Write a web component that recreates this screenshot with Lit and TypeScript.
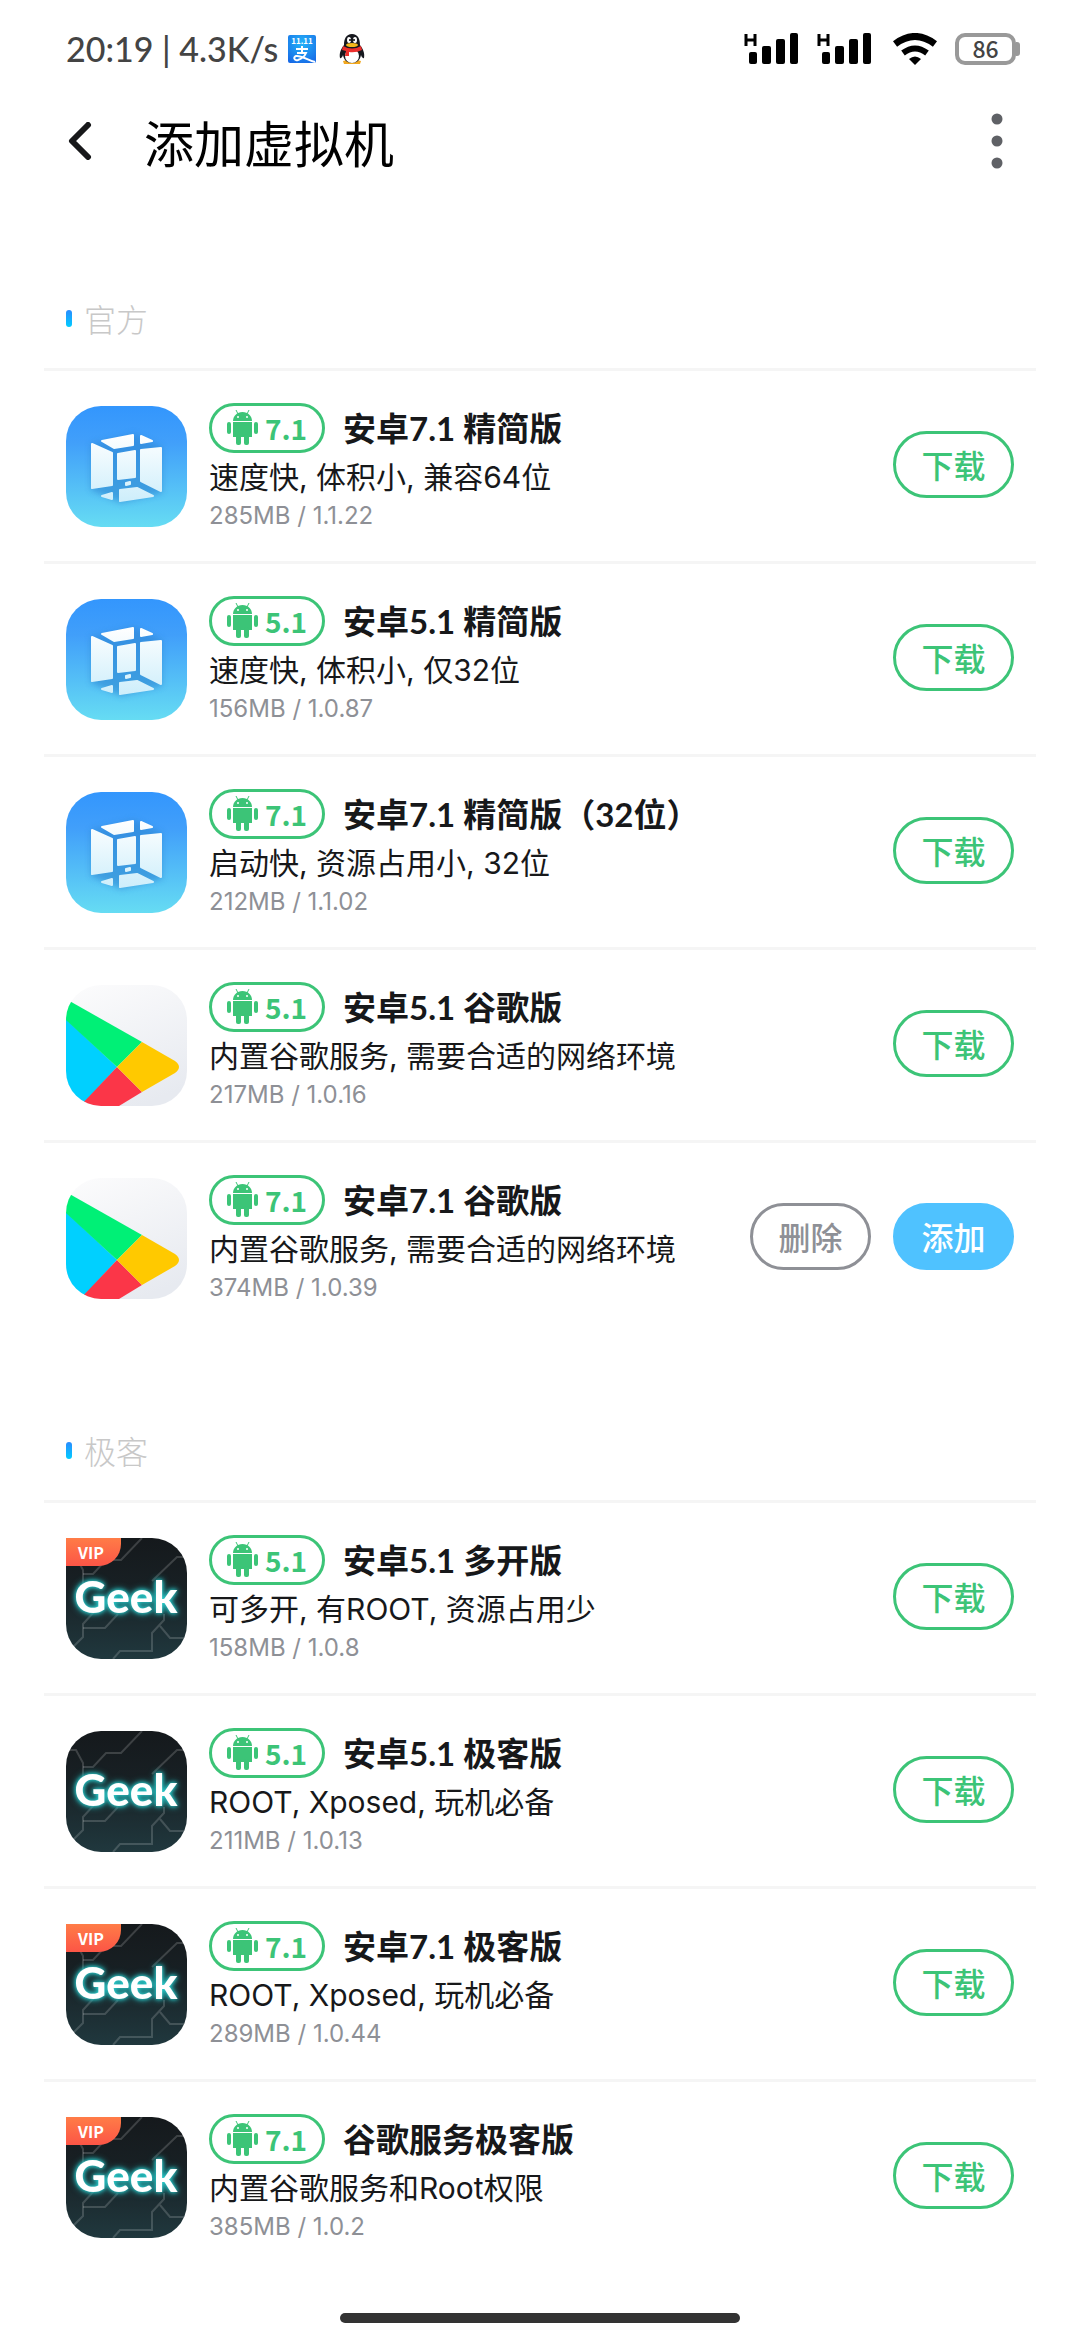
import {css, html, LitElement, nothing, svg} from 'lit';
import {customElement, property} from 'lit/decorators.js';

type Artwork = 'cube' | 'play' | 'geek';

interface Machine {
  art: Artwork;
  vip?: boolean;
  android: string;
  name: string;
  summary: string;
  size: string;
  version: string;
  installed?: boolean;
}

interface Group {
  label: string;
  machines: Machine[];
}

const groups: Group[] = [
  {
    label: '官方',
    machines: [
      {
        art: 'cube',
        android: '7.1',
        name: '安卓7.1 精简版',
        summary: '速度快, 体积小, 兼容64位',
        size: '285MB',
        version: '1.1.22',
      },
      {
        art: 'cube',
        android: '5.1',
        name: '安卓5.1 精简版',
        summary: '速度快, 体积小, 仅32位',
        size: '156MB',
        version: '1.0.87',
      },
      {
        art: 'cube',
        android: '7.1',
        name: '安卓7.1 精简版（32位）',
        summary: '启动快, 资源占用小, 32位',
        size: '212MB',
        version: '1.1.02',
      },
      {
        art: 'play',
        android: '5.1',
        name: '安卓5.1 谷歌版',
        summary: '内置谷歌服务, 需要合适的网络环境',
        size: '217MB',
        version: '1.0.16',
      },
      {
        art: 'play',
        android: '7.1',
        name: '安卓7.1 谷歌版',
        summary: '内置谷歌服务, 需要合适的网络环境',
        size: '374MB',
        version: '1.0.39',
        installed: true,
      },
    ],
  },
  {
    label: '极客',
    machines: [
      {
        art: 'geek',
        vip: true,
        android: '5.1',
        name: '安卓5.1 多开版',
        summary: '可多开, 有ROOT, 资源占用少',
        size: '158MB',
        version: '1.0.8',
      },
      {
        art: 'geek',
        android: '5.1',
        name: '安卓5.1 极客版',
        summary: 'ROOT, Xposed, 玩机必备',
        size: '211MB',
        version: '1.0.13',
      },
      {
        art: 'geek',
        vip: true,
        android: '7.1',
        name: '安卓7.1 极客版',
        summary: 'ROOT, Xposed, 玩机必备',
        size: '289MB',
        version: '1.0.44',
      },
      {
        art: 'geek',
        vip: true,
        android: '7.1',
        name: '谷歌服务极客版',
        summary: '内置谷歌服务和Root权限',
        size: '385MB',
        version: '1.0.2',
      },
    ],
  },
];

const cubeArt = svg`
  <defs>
    <linearGradient id="sky" x1="0" y1="0" x2="0" y2="1">
      <stop offset="0" stop-color="#3396fd" />
      <stop offset="0.3" stop-color="#419ffa" />
      <stop offset="1" stop-color="#66dcf3" />
    </linearGradient>
    <linearGradient id="pane" gradientUnits="userSpaceOnUse" x1="0" y1="28" x2="0" y2="96">
      <stop offset="0" stop-color="#ffffff" />
      <stop offset="1" stop-color="#cdeefb" />
    </linearGradient>
    <filter id="soft" x="-20%" y="-20%" width="140%" height="140%">
      <feGaussianBlur stdDeviation="3" />
    </filter>
  </defs>
  <rect width="121" height="121" fill="url(#sky)" />
  <path
    d="M25 38 68 28 96 41v46L55 97 25 84z"
    fill="#2f86d2"
    opacity="0.6"
    filter="url(#soft)"
  />
  <g fill="url(#pane)" stroke="url(#pane)" stroke-width="2" stroke-linejoin="round">
    <path d="M36 35 67 29v10L48 42z" />
    <path d="M75 30 86 35 75 37z" />
    <path d="M26 38 46 47v32L26 82z" />
    <path d="M52 48 69 45v26L52 73z" />
    <path d="M75 44 95 42v43L75 75z" />
    <path d="M60 77 64 76v2L60 79z" />
    <path d="M36 90 46 87v6z" />
    <path d="M54 84 71 82 87 90 54 95z" />
  </g>
`;

const playArt = svg`
  <defs>
    <linearGradient id="mist" x1="0.2" y1="0" x2="0.6" y2="1">
      <stop offset="0" stop-color="#fbfbfc" />
      <stop offset="1" stop-color="#e7eaf0" />
    </linearGradient>
  </defs>
  <rect width="121" height="121" fill="url(#mist)" />
  <path d="M0 34 51 82 15 121H0z" fill="#00d0ff" />
  <path d="M0 35V14L76 57 51 82z" fill="#00f076" />
  <path d="M51 82 76 107 53 121H14z" fill="#fb3648" />
  <path d="M76 57 109 76q8 6 0 12L76 107 51 82z" fill="#ffc900" />
`;

const geekArt = svg`
  <defs>
    <linearGradient id="night" x1="0" y1="0" x2="0" y2="1">
      <stop offset="0" stop-color="#15191c" />
      <stop offset="0.4" stop-color="#182024" />
      <stop offset="1" stop-color="#20383e" />
    </linearGradient>
  </defs>
  <rect width="121" height="121" fill="url(#night)" />
  <g fill="none" stroke="#ffffff" stroke-opacity="0.17" stroke-width="2">
    <path d="M0 19H10L17 32V46" />
    <path d="M17 36H27L40 22H55L76 0" />
    <path d="M121 19H111L86 43" />
    <path d="M28 74 17 86V99L7 109" />
    <path d="M17 90H39L52 76" />
    <path d="M47 121 54 113H86V95L98 82V76" />
    <path d="M94 88 104 100H121" />
  </g>
  <text class="geek" x="60" y="75" text-anchor="middle">Geek</text>
`;

const artwork = {cube: cubeArt, play: playArt, geek: geekArt};

@customElement('vm-item')
class VmItem extends LitElement {
  @property({attribute: false}) machine!: Machine;

  override render() {
    const {art, vip, android, name, summary, size, version, installed} =
      this.machine;
    return html`
      <article class="item">
        <div class="cover">
          <svg
            class=${vip ? 'art art-vip' : 'art'}
            viewBox="0 0 121 121"
            aria-hidden="true"
          >
            ${artwork[art]}
          </svg>
          ${vip ? html`<span class="vip">VIP</span>` : nothing}
        </div>
        <div class="info">
          <div class="heading">
            <span class="badge">
              <svg class="robot" viewBox="0 0 31 35" aria-hidden="true">
                <path d="M6 11C6 6 10 2 15.500 2S25 6 25 11z" />
                <path d="M11 4 9 0M20 4 22 0" stroke="currentColor" />
                <path d="M6 12H25V27H6z" />
                <rect x="0" y="12" width="4" height="12" rx="2" />
                <rect x="27" y="12" width="4" height="12" rx="2" />
                <rect x="9" y="24" width="5" height="11" rx="2" />
                <rect x="17" y="24" width="5" height="11" rx="2" />
                <circle cx="11" cy="7" r="1" fill="#fff" />
                <circle cx="20" cy="7" r="1" fill="#fff" />
              </svg>
              ${android}
            </span>
            <h3 class="name">${name}</h3>
          </div>
          <p class="summary">${summary}</p>
          <p class="meta">${size} / ${version}</p>
        </div>
        <div class="actions">
          ${installed
            ? html`
                <button class="action delete" type="button">删除</button>
                <button class="action add" type="button">添加</button>
              `
            : html`<button class="action" type="button">下载</button>`}
        </div>
      </article>
    `;
  }

  static override styles = css`
    :host {
      display: block;
      --green: #3cc477;
      --grey: #8e9096;
    }

    .item {
      display: flex;
      align-items: center;
      height: 190px;
      padding: 0 22px;
      border-top: 3px solid #f5f5f5;
    }

    .cover {
      position: relative;
      flex: none;
      width: 121px;
      height: 121px;
    }

    .art {
      display: block;
      width: 100%;
      height: 100%;
      border-radius: 35px;
    }

    .art-vip {
      border-top-left-radius: 0;
    }

    .geek {
      font: 900 44px Lato, 'Open Sans', sans-serif;
      fill: #fff;
      filter: drop-shadow(0 0 2px #2fd6d6) drop-shadow(0 0 3px #1fa9ab);
    }

    .vip {
      position: absolute;
      top: 0;
      left: 0;
      width: 55px;
      height: 28px;
      border-bottom-right-radius: 22px;
      background: linear-gradient(#ff7c47, #fc5546);
      color: #fff;
      font: 700 16px/28px 'Noto Sans CJK SC', sans-serif;
      text-indent: 12px;
    }

    .info {
      flex: 1;
      min-width: 0;
      margin-left: 22px;
    }

    .heading {
      display: flex;
      align-items: center;
      gap: 18px;
    }

    .badge {
      box-sizing: border-box;
      display: flex;
      align-items: center;
      justify-content: center;
      gap: 7px;
      width: 116px;
      height: 50px;
      border: 3px solid var(--green);
      border-radius: 25px;
      color: var(--green);
      font: 700 28px/44px 'Noto Sans CJK SC', sans-serif;
    }

    .robot {
      width: 31px;
      height: 35px;
      fill: currentColor;
    }

    .name {
      margin: 0;
      color: #17181a;
      font: 700 33px/50px Lato, 'Noto Sans CJK SC', sans-serif;
      white-space: nowrap;
    }

    .summary {
      margin: 6px 0 7px;
      color: #17181a;
      font-size: 30px;
      line-height: 36px;
    }

    .meta {
      margin: 0;
      color: var(--grey);
      font-size: 24px;
      line-height: 28px;
    }

    .actions {
      display: flex;
      gap: 22px;
      padding-bottom: 4px;
    }

    .action {
      box-sizing: border-box;
      width: 121px;
      height: 67px;
      padding: 0;
      border: 3px solid var(--green);
      border-radius: 34px;
      background: #fff;
      color: var(--green);
      font-family: 'Noto Sans CJK SC', sans-serif;
      font-size: 32px;
      font-weight: 500;
      line-height: 48px;
    }

    .delete {
      border-color: var(--grey);
      color: var(--grey);
    }

    .add {
      border-color: #4fc2ff;
      background: #4fc2ff;
      color: #fff;
    }
  `;
}

const signal = html`
  <svg class="signal" viewBox="0 0 54 32" aria-hidden="true">
    <path d="M2 1V13M11 1V13M2 7H11" stroke="#000" stroke-width="3" />
    <rect x="5" y="19" width="8" height="12" rx="2" />
    <rect x="18" y="13" width="9" height="18" rx="2" />
    <rect x="32" y="6" width="9" height="25" rx="2" />
    <rect x="46" y="0" width="8" height="31" rx="2" />
  </svg>
`;

@customElement('app-root')
class AppRoot extends LitElement {
  override render() {
    return html`
      <div class="status">
        <span class="clock">20:19 | 4.3K/s</span>
        <svg class="alipay" viewBox="0 0 28 28" aria-hidden="true">
          <defs>
            <radialGradient id="pay" cx="0.5" cy="0.3" r="0.8">
              <stop offset="0" stop-color="#25b4f8" />
              <stop offset="1" stop-color="#1668e6" />
            </radialGradient>
          </defs>
          <rect width="28" height="28" rx="2" fill="url(#pay)" />
          <text class="sale" x="14" y="9" text-anchor="middle">11.11</text>
          <g fill="none" stroke="#fff" stroke-width="2">
            <path d="M8 14H20M14 11V18M9 18H18Q16 23 10 25C6 26 5 22 8 21 13 20 19 25 27 27" />
          </g>
        </svg>
        <svg class="penguin" viewBox="0 0 26 30" aria-hidden="true">
          <path d="M4 27Q13 24 22 27L21 30H5z" fill="#f2a81d" />
          <path
            d="M13 0C7 0 5 5 5 11 2 15 0 19 1 24 2 25 4 22 4 21 5 27 9 29 13 29S21 27 22 21C22 22 24 25 25 24 26 19 24 15 21 11 21 5 19 0 13 0z"
            fill="#17191f"
          />
          <ellipse cx="13" cy="22" rx="7" ry="7" fill="#fff" />
          <ellipse cx="10" cy="6" rx="2" ry="3" fill="#fff" />
          <ellipse cx="16" cy="6" rx="2" ry="3" fill="#fff" />
          <circle cx="11" cy="6" r="1" />
          <circle cx="15" cy="6" r="1" />
          <ellipse cx="13" cy="11" rx="6" ry="2" fill="#f4b81c" />
          <path d="M4 12Q13 17 22 12L23 16Q17 19 10 18V22H6L7 17 3 16z" fill="#ec2f2d" />
        </svg>
        <span class="spacer"></span>
        ${signal} ${signal}
        <svg class="wifi" viewBox="0 0 44 32" aria-hidden="true">
          <g fill="none" stroke="#000" stroke-width="7">
            <path d="M2 11Q22 -4 42 11" />
            <path d="M10 20Q22 11 34 20" stroke-width="6" />
          </g>
          <path d="M16 26Q22 21 28 26L22 32z" />
        </svg>
        <span class="battery">86</span>
      </div>
      <header class="bar">
        <button class="icon-button" type="button" aria-label="返回">
          <svg class="back" viewBox="0 0 24 38" aria-hidden="true">
            <path d="M20 3 4 19 20 35" />
          </svg>
        </button>
        <h1 class="title">添加虚拟机</h1>
        <button class="icon-button" type="button" aria-label="更多">
          <svg class="more" viewBox="0 0 12 56" aria-hidden="true">
            <circle cx="6" cy="6" r="5.500" />
            <circle cx="6" cy="28" r="5.500" />
            <circle cx="6" cy="50" r="5.500" />
          </svg>
        </button>
      </header>
      <main class="list">
        ${groups.map(
          (group) => html`
            <section>
              <h2 class="label">${group.label}</h2>
              ${group.machines.map(
                (machine) => html`<vm-item .machine=${machine}></vm-item>`,
              )}
            </section>
          `,
        )}
      </main>
      <div class="gesture"></div>
    `;
  }

  static override styles = css`
    :host {
      display: flex;
      flex-direction: column;
      box-sizing: border-box;
      min-height: 100vh;
      background: #fff;
      color: #000;
      font-family: Inter, 'Noto Sans CJK SC', sans-serif;
    }

    .status {
      display: flex;
      align-items: center;
      height: 98px;
      padding: 0 64px 0 66px;
    }

    .clock {
      color: #444;
      font: 500 34px/40px Lato, sans-serif;
    }

    .alipay {
      width: 28px;
      height: 28px;
      margin-left: 10px;
    }

    .sale {
      fill: #fff;
      font: 700 8px 'Noto Sans CJK SC', sans-serif;
    }

    .penguin {
      width: 26px;
      height: 30px;
      margin-left: 23px;
    }

    .spacer {
      flex: 1;
    }

    .signal {
      width: 54px;
      height: 32px;
      margin-right: 19px;
    }

    .wifi {
      width: 44px;
      height: 32px;
      margin: 0 18px 0 3px;
    }

    .battery {
      position: relative;
      box-sizing: border-box;
      width: 61px;
      height: 32px;
      border: 4px solid #999;
      border-radius: 10px;
      color: #444;
      font: 500 23px/22px 'Noto Sans CJK SC', sans-serif;
      text-align: center;
    }

    .battery::after {
      content: '';
      position: absolute;
      top: 5px;
      right: -8px;
      width: 4px;
      height: 14px;
      border-radius: 0 3px 3px 0;
      background: #999;
    }

    .bar {
      display: flex;
      align-items: center;
      height: 86px;
      padding: 0 66px 17px;
    }

    .icon-button {
      display: flex;
      padding: 0;
      border: 0;
      background: none;
    }

    .back {
      width: 24px;
      height: 38px;
      margin-left: 2px;
      fill: none;
      stroke: #17181a;
      stroke-width: 6;
      stroke-linecap: round;
      stroke-linejoin: round;
    }

    .more {
      width: 12px;
      height: 56px;
      margin-right: 11px;
      fill: #5f6166;
    }

    .title {
      flex: 1;
      margin: 0 0 0 52px;
      font: 400 50px/72px 'Noto Sans CJK SC', sans-serif;
    }

    .list {
      flex: 1;
      padding: 0 44px;
    }

    .label {
      display: flex;
      align-items: center;
      gap: 12px;
      margin: 0;
      padding: 93px 22px 26px;
      color: #c8c8c8;
      font: 300 32px/48px 'Noto Sans CJK SC', sans-serif;
    }

    .label::before {
      content: '';
      width: 6px;
      height: 17px;
      border-radius: 3px;
      background: linear-gradient(#2a8cff, #00ccff);
    }

    .gesture {
      align-self: center;
      width: 37%;
      height: 10px;
      margin: 12px 0 17px;
      border-radius: 5px;
      background: #333;
    }
  `;
}

declare global {
  interface HTMLElementTagName {
    'app-root': AppRoot;
    'vm-item': VmItem;
  }
}
